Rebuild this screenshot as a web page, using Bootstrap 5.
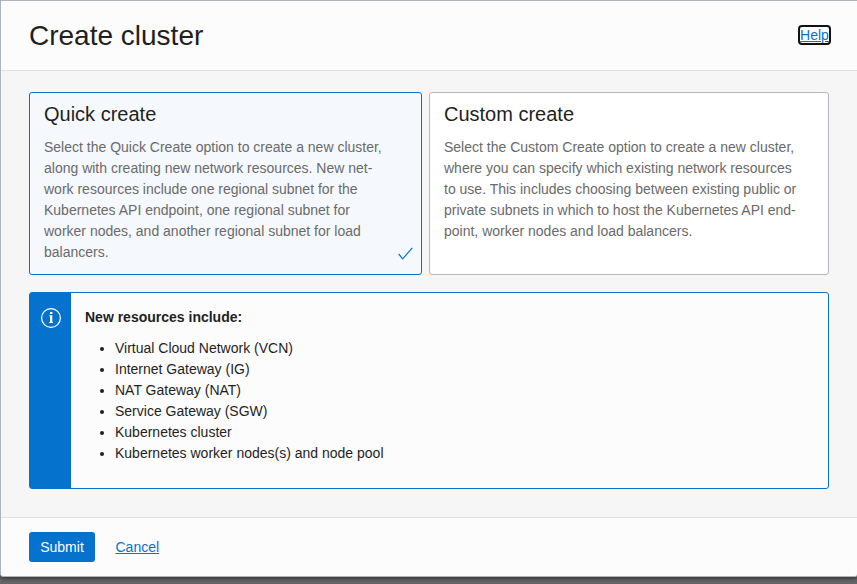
<!DOCTYPE html>
<html lang="en">
<head>
<meta charset="utf-8">
<title>Create cluster</title>
<link rel="stylesheet" href="https://cdn.jsdelivr.net/npm/bootstrap@5.3.0/dist/css/bootstrap.min.css">
<style>
  html { height: 100%; overflow: hidden; }
  body { height: 100%; overflow: hidden; background: #666464; color: #1f1f1f; font: 14px/21px "Liberation Sans", Arial, sans-serif; }
  .dialog { width: 858px; height: 577px; background: #fcfcfc; border: 1px solid #adb4c2; border-radius: 0 0 3px 3px; box-shadow: 0 1px 4px rgba(0,0,0,.6); }
  .dialog-head { height: 70px; padding: 0 26px 0 28px; border-bottom: 1px solid #e0e0e0; }
  .dialog-head h1 { font-size: 28px; line-height: 34px; font-weight: 400; }
  .dialog-main { height: 447px; background: #f6f6f6; padding: 21px 28px 0; border-bottom: 1px solid #e0e0e0; }
  .dialog-foot { padding-left: 28px; height: 58px; gap: 20.5px; }
  a { color: #0572ce; text-underline-offset: 1px; }
  .help { border: 2px solid #111; border-radius: 4px; line-height: 16px; background: #fff; width: 33px; height: 20px; margin-bottom: 2px; }
  .option { height: 183px; border: 1px solid #b3b7c2; border-radius: 3px; background: #fff; padding: 9px 14px; color: #6a6a6a; }
  .option h2 { font-size: 20px; line-height: 24px; font-weight: 400; color: #1f1f1f; margin-bottom: 11px; }
  .option-quick { width: 393px; background: #f5f9fe; border-color: #0572ce; }
  .option-custom { width: 400px; }
  .tick { right: 8px; bottom: 14px; }
  .notice { width: 800px; height: 197px; margin-top: 17px; border: 1px solid #0572ce; border-radius: 3px; background: #fcfcfc; }
  .notice-bar { width: 41px; background: #0572ce; padding-top: 15px; }
  .notice-text { padding: 14px; }
  .notice-text ul { margin-top: 10px; padding-left: 30px; }
  .submit { width: 66px; height: 30px; padding: 0; border: 0; border-radius: 3px; background: #0572ce; color: #fff; font-size: 14px; }
</style>
<script src="https://cdn.jsdelivr.net/npm/bootstrap@5.3.0/dist/js/bootstrap.bundle.min.js"></script>
</head>
<body>
<div class="dialog d-flex flex-column">
  <header class="dialog-head d-flex align-items-center justify-content-between">
    <h1 class="mb-0">Create cluster</h1>
    <a href="#" class="help d-block text-center">Help</a>
  </header>
  <main class="dialog-main">
    <div class="d-flex justify-content-between">
      <section class="option option-quick position-relative">
        <h2>Quick create</h2>
        <p class="mb-0">Select the Quick Create option to create a new cluster,<br>along with creating new network resources. New net-<br>work resources include one regional subnet for the<br>Kubernetes API endpoint, one regional subnet for<br>worker nodes, and another regional subnet for load<br>balancers.</p>
        <svg class="tick position-absolute" width="15" height="13" viewBox="0 0 15 13" fill="none" stroke="#0572ce" stroke-width="1.2"><path d="M.7 7 4.7 11.8 14.3.9"/></svg>
      </section>
      <section class="option option-custom">
        <h2>Custom create</h2>
        <p class="mb-0">Select the Custom Create option to create a new cluster,<br>where you can specify which existing network resources<br>to use. This includes choosing between existing public or<br>private subnets in which to host the Kubernetes API end-<br>point, worker nodes and load balancers.</p>
      </section>
    </div>
    <section class="notice d-flex">
      <div class="notice-bar text-center">
        <svg class="d-block mx-auto" width="20" height="20" viewBox="0 0 20 20"><circle cx="10" cy="10" r="9.4" fill="none" stroke="#fff" stroke-width="1.2"/><path d="M9 4h2.4v2H9zM8.4 7.3h2.9V14H12v1H8.2v-1H9V8.3h-.6z" fill="#fff"/></svg>
      </div>
      <div class="notice-text">
        <strong class="d-block">New resources include:</strong>
        <ul class="mb-0">
          <li>Virtual Cloud Network (VCN)</li>
          <li>Internet Gateway (IG)</li>
          <li>NAT Gateway (NAT)</li>
          <li>Service Gateway (SGW)</li>
          <li>Kubernetes cluster</li>
          <li>Kubernetes worker nodes(s) and node pool</li>
        </ul>
      </div>
    </section>
  </main>
  <footer class="dialog-foot d-flex align-items-center">
    <button class="submit btn" type="button">Submit</button>
    <a href="#">Cancel</a>
  </footer>
</div>
</body>
</html>
